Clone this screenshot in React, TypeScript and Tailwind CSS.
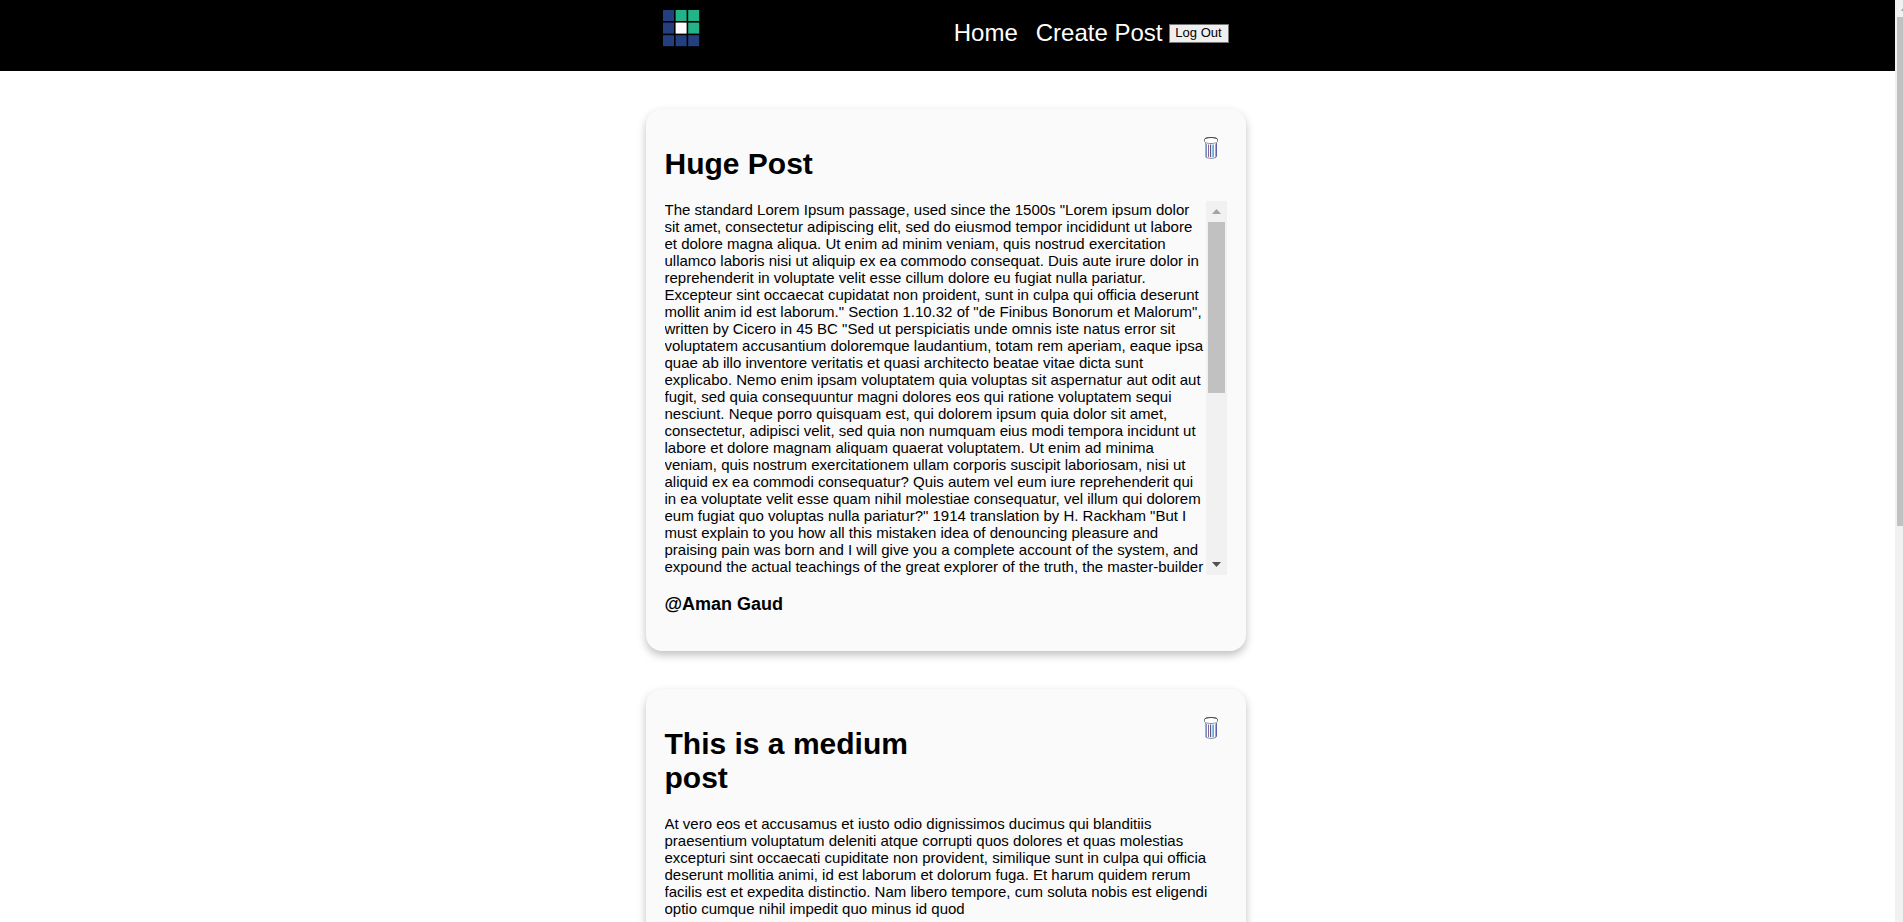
import React from "react";

const HUGE_TEXT =
  'The standard Lorem Ipsum passage, used since the 1500s "Lorem ipsum dolor sit amet, consectetur adipiscing elit, sed do eiusmod tempor incididunt ut labore et dolore magna aliqua. Ut enim ad minim veniam, quis nostrud exercitation ullamco laboris nisi ut aliquip ex ea commodo consequat. Duis aute irure dolor in reprehenderit in voluptate velit esse cillum dolore eu fugiat nulla pariatur. Excepteur sint occaecat cupidatat non proident, sunt in culpa qui officia deserunt mollit anim id est laborum." Section 1.10.32 of "de Finibus Bonorum et Malorum", written by Cicero in 45 BC "Sed ut perspiciatis unde omnis iste natus error sit voluptatem accusantium doloremque laudantium, totam rem aperiam, eaque ipsa quae ab illo inventore veritatis et quasi architecto beatae vitae dicta sunt explicabo. Nemo enim ipsam voluptatem quia voluptas sit aspernatur aut odit aut fugit, sed quia consequuntur magni dolores eos qui ratione voluptatem sequi nesciunt. Neque porro quisquam est, qui dolorem ipsum quia dolor sit amet, consectetur, adipisci velit, sed quia non numquam eius modi tempora incidunt ut labore et dolore magnam aliquam quaerat voluptatem. Ut enim ad minima veniam, quis nostrum exercitationem ullam corporis suscipit laboriosam, nisi ut aliquid ex ea commodi consequatur? Quis autem vel eum iure reprehenderit qui in ea voluptate velit esse quam nihil molestiae consequatur, vel illum qui dolorem eum fugiat quo voluptas nulla pariatur?" 1914 translation by H. Rackham "But I must explain to you how all this mistaken idea of denouncing pleasure and praising pain was born and I will give you a complete account of the system, and expound the actual teachings of the great explorer of the truth, the master-builder';

const MEDIUM_TEXT =
  "At vero eos et accusamus et iusto odio dignissimos ducimus qui blanditiis praesentium voluptatum deleniti atque corrupti quos dolores et quas molestias excepturi sint occaecati cupiditate non provident, similique sunt in culpa qui officia deserunt mollitia animi, id est laborum et dolorum fuga. Et harum quidem rerum facilis est et expedita distinctio. Nam libero tempore, cum soluta nobis est eligendi optio cumque nihil impedit quo minus id quod";

function Logo() {
  const blue = "#243f80";
  const green = "#22b488";
  const cells = [blue, green, green, blue, "#ffffff", green, blue, blue, blue];
  return (
    <svg width="37" height="37" viewBox="0 0 37 37" role="img" aria-label="Logo">
      {cells.map((fill, i) => (
        <rect
          key={i}
          x={(i % 3) * 12.6}
          y={Math.floor(i / 3) * 12.6}
          width="11"
          height="11"
          fill={fill}
        />
      ))}
    </svg>
  );
}

function TrashIcon() {
  return (
    <svg width="16" height="24" viewBox="0 0 16 24" fill="none" aria-hidden="true">
      <path d="M2.5 7v13.5c0 1 2.5 1.8 5.5 1.8s5.5-.8 5.5-1.8V7" fill="#fff" stroke="#8a8a8a" />
      <ellipse cx="8" cy="3.5" rx="6.5" ry="2" fill="#fff" stroke="#5a5a5a" />
      <path d="M1.500 3.500v2c0 1.200 3 2 6.500 2s6.500-.8 6.500-2v-2" fill="#fff" stroke="#7b8894" />
      <path d="M1.500 3.500c0-1.200 3-2 6.500-2s6.500.8 6.500 2" stroke="#4a4a4a" />
      <path d="M2.500 7.500v13" stroke="#e0a070" />
      <path d="M3.500 8v13" stroke="#7b92c0" />
      <path d="M5.500 8.500v12.500" stroke="#8a62a0" />
      <path d="M7.500 8.500v12.500" stroke="#5a5a72" />
      <path d="M8.500 8.500v12.500" stroke="#f3e3b8" />
      <path d="M9.500 8.500v12.500" stroke="#8cc4ec" />
      <path d="M10.500 8.500v12.500" stroke="#d08a5c" />
      <path d="M12.500 8v13" stroke="#d8a070" />
      <path d="M13.500 7.500v13" stroke="#5a5fae" />
    </svg>
  );
}

function Arrow({ down = false }: { down?: boolean }) {
  return (
    <span className="flex h-[21px] w-[21px] shrink-0 items-center justify-center">
      <svg width="9" height="5" viewBox="0 0 9 5" aria-hidden="true">
        <path d={down ? "M0 0h9L4.5 5z" : "M0 5h9L4.5 0z"} fill={down ? "#505050" : "#a3a3a3"} />
      </svg>
    </span>
  );
}

function ScrollTrack() {
  return (
    <div aria-hidden="true" className="flex w-[21px] shrink-0 flex-col items-center justify-between bg-[#f1f1f1]">
      <Arrow />
      <div className="mb-auto h-[171px] w-[17px] bg-[#c1c1c1]" />
      <Arrow down />
    </div>
  );
}

type PostProps = { title: string; text: string; author: string; scroll?: boolean };

function Post({ title, text, author, scroll = false }: PostProps) {
  return (
    <article className="w-full max-w-[600px] rounded-2xl bg-[#fafafa] px-[19px] pt-[18px] pb-[37px] shadow-[0_4px_8px_rgba(0,0,0,0.25)]">
      <div className="flex items-start justify-between">
        <h1 className="my-5 w-1/2 text-[30px] leading-[34px] font-bold">{title}</h1>
        <button type="button" aria-label="Delete post" className="mt-[9px] mr-2 cursor-pointer">
          <TrashIcon />
        </button>
      </div>
      <div className="flex max-h-[375px]">
        <p className="min-w-0 flex-1 overflow-y-auto text-[15px] leading-[17px] [scrollbar-width:none]">{text}</p>
        {scroll && <ScrollTrack />}
      </div>
      <h3 className="mt-[19px] text-lg leading-5 font-bold">{author}</h3>
    </article>
  );
}

export default function App() {
  return (
    <div className="flex h-screen overflow-hidden bg-white font-['Liberation_Sans',Arial,sans-serif] text-black">
      <div className="min-w-0 flex-1 overflow-y-auto [scrollbar-width:none]">
        <header className="flex h-[71px] justify-center bg-black pr-1">
          <div className="flex w-full max-w-[566px] items-start justify-between pt-[10px]">
            <a href="#home" aria-label="Home page">
              <Logo />
            </a>
            <nav className="flex items-center pt-[9px] text-2xl leading-7 text-white">
              <a href="#home" className="mr-[18px]">
                Home
              </a>
              <a href="#create" className="mr-[6px]">
                Create Post
              </a>
              <button
                type="button"
                className="h-[19px] w-[60px] border border-[#767676] bg-[#efefef] text-[13px] leading-4 text-black"
              >
                Log Out
              </button>
            </nav>
          </div>
        </header>
        <main className="flex flex-col items-center gap-[38px] py-[38px] pr-1">
          <Post title="Huge Post" text={HUGE_TEXT} author="@Aman Gaud" scroll />
          <Post title="This is a medium post" text={MEDIUM_TEXT} author="@Aman Gaud" />
        </main>
      </div>
      <div aria-hidden="true" className="w-2 shrink-0 overflow-hidden bg-[#f1f1f1] pl-[2px]">
        <div className="flex h-[17px] items-center justify-end">
          <svg width="2" height="5" viewBox="0 0 2 5">
            <path d="M0 5h2V2z" fill="#a3a3a3" />
          </svg>
        </div>
        <div className="h-[509px] bg-[#c1c1c1]" />
      </div>
    </div>
  );
}
